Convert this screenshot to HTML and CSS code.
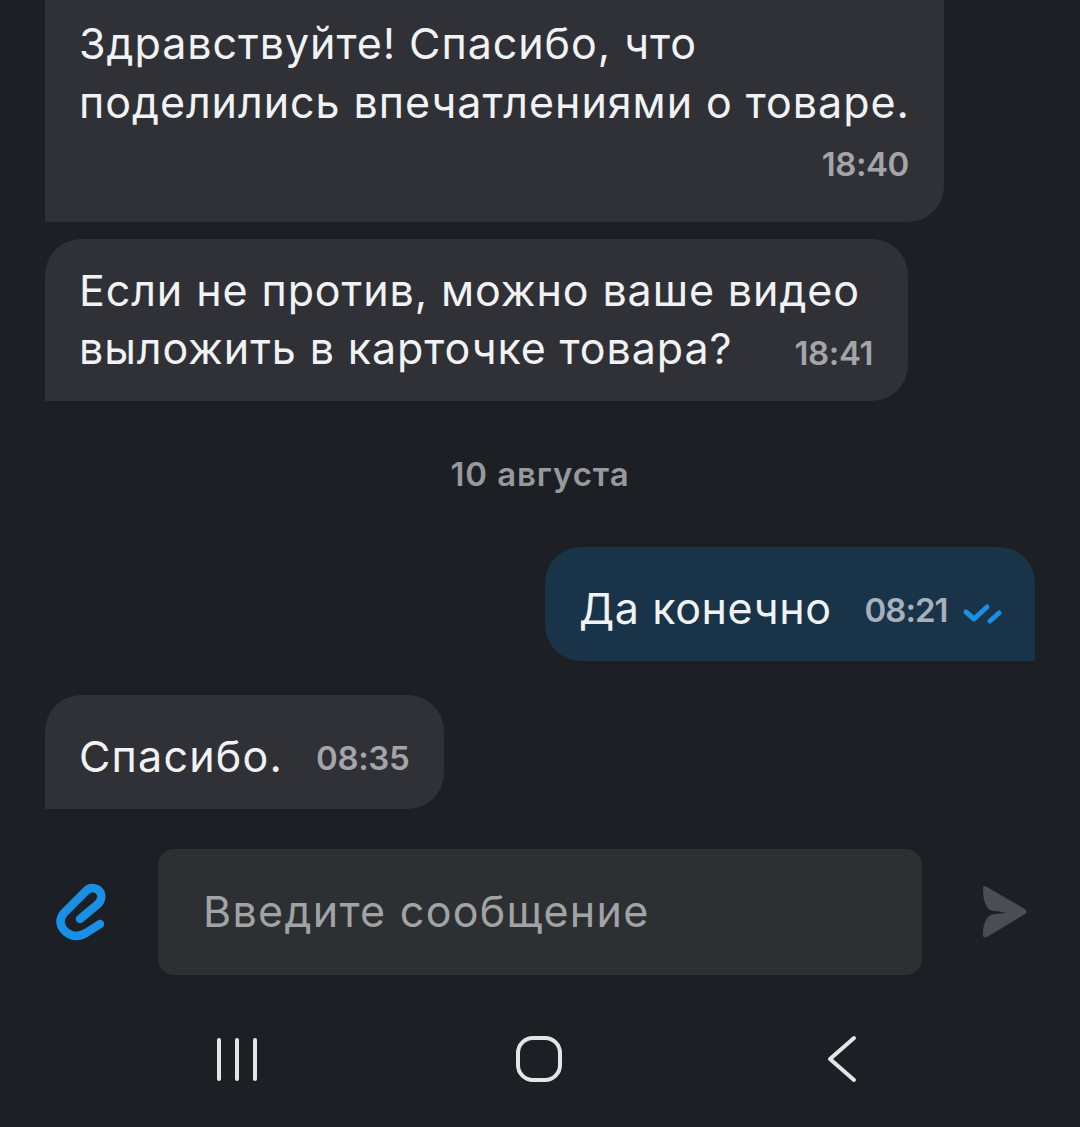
FILE: index.html
```html
<!DOCTYPE html>
<html lang="ru">
<head>
  <meta charset="UTF-8" />
  <title>Чат</title>
  <link rel="stylesheet" href="styles.css">
</head>
<body>
  <div class="chat">
    <div class="messages">
      <div class="bubble bubble-first">
        <p class="text">Здравствуйте! Спасибо, что<br>поделились впечатлениями о товаре.</p>
        <div class="time time-below">18:40</div>
      </div>
      <div class="bubble bubble-second">
        <p class="text">Если не против, можно ваше видео<br>выложить в карточке товара?</p>
        <span class="time time-corner">18:41</span>
      </div>
      <div class="date">10 августа</div>
      <div class="bubble bubble-mine">
        <span class="text">Да конечно</span>
        <span class="time">08:21</span>
        <svg class="ticks" width="50" height="35" viewBox="0 0 50 35" fill="none" stroke="#1a8fe6" stroke-width="5" stroke-linecap="round" stroke-linejoin="round">
          <path d="M6 12l8 7 13-12" />
          <path d="M30 21l9-8" />
        </svg>
      </div>
      <div class="bubble bubble-short">
        <span class="text">Спасибо.</span>
        <span class="time">08:35</span>
      </div>
    </div>

    <div class="composer">
      <svg class="clip" width="60" height="65" viewBox="0 0 60 65" fill="none" stroke="#1a8fe6" stroke-width="8.5" stroke-linecap="round" stroke-linejoin="round">
        <path d="M50 44L36 53C29 57 22 57 16 52C9 46 9 39 14 33L36 11C41 6 49 8 51 14C52 18 51 21 48 24L30 39" />
      </svg>
      <div class="input">Введите сообщение</div>
      <svg class="send" width="48" height="54" viewBox="0 0 48 54">
        <path d="M3 2c1-1 2-1 4 0l38 22c2 2 2 4 0 5L7 52c-3 1-4 0-4-2 0-7 1-13 5-18 2-2 4-3 8-3l10-1-10-2c-5 0-7-1-9-4C4 17 3 11 3 2z" fill="#4a4d51" />
      </svg>
    </div>

    <div class="navbar">
      <div class="nav-recent"><span></span><span></span><span></span></div>
      <div class="nav-home"></div>
      <svg class="nav-back" width="32" height="48" viewBox="0 0 32 48" fill="none" stroke="#e3e5e6" stroke-width="4" stroke-linecap="round" stroke-linejoin="round">
        <path d="M28 3L4 24l24 21" />
      </svg>
    </div>
  </div>
</body>
</html>
```

FILE: styles.css
```css
:root {
  --bg: #1c1f24;
  --bubble: #2f3136;
  --bubble-mine: #193349;
  --input: #2d3033;
  --text: #f1f2f4;
  --time: #a3a5a8;
  --time-mine: #a6b1bb;
  --placeholder: #a1a3a5;
}

* {
  margin: 0;
  padding: 0;
  box-sizing: border-box;
}

html, body {
  width: 1080px;
  height: 1127px;
  overflow: hidden;
  background: var(--bg);
  color: var(--text);
  font-family: Inter, "Noto Sans", sans-serif;
}

.chat {
  height: 1127px;
  display: flex;
  flex-direction: column;
  justify-content: flex-end;
}

.messages {
  display: flex;
  flex-direction: column;
  align-items: flex-start;
  padding: 0 45px;
}

.bubble {
  background: var(--bubble);
  border-radius: 36px 36px 36px 0;
}

.text {
  font-size: 43px;
  line-height: 59px;
  letter-spacing: 0.9px;
  white-space: nowrap;
}

.time {
  font-size: 33px;
  font-weight: 600;
  letter-spacing: -0.4px;
  color: var(--time);
}

.bubble-first {
  width: 899px;
  height: 240px;
  margin-top: -18px;
  padding: 32px 35px 0 34px;
  border-radius: 0 0 36px 0;
}

.bubble-first .text {
  letter-spacing: 0.95px;
}

.time-below {
  text-align: right;
  margin-top: 12px;
}

.bubble-second {
  position: relative;
  width: 863px;
  height: 162px;
  margin-top: 17px;
  padding: 22px 35px 0 34px;
}

.bubble-second .text {
  line-height: 58px;
}

.time-corner {
  position: absolute;
  right: 35px;
  bottom: 28px;
}

.date {
  align-self: center;
  margin-top: 53px;
  font-size: 33px;
  line-height: 40px;
  font-weight: 600;
  letter-spacing: 0.9px;
  color: #97999c;
}

.bubble-mine {
  align-self: flex-end;
  display: flex;
  align-items: center;
  width: 490px;
  height: 114px;
  margin-top: 53px;
  padding: 8px 0 0 34px;
  background: var(--bubble-mine);
  border-radius: 36px 36px 0 36px;
}

.bubble-mine .text {
  letter-spacing: 0.6px;
}

.bubble-mine .time {
  margin-left: 33px;
  margin-top: 4px;
  letter-spacing: -1px;
  color: var(--time-mine);
}

.ticks {
  margin-left: 12px;
  margin-top: 18px;
}

.bubble-short {
  display: flex;
  align-items: center;
  width: 399px;
  height: 114px;
  margin-top: 34px;
  padding: 8px 0 0 34px;
}

.bubble-short .text {
  letter-spacing: 1.2px;
}

.bubble-short .time {
  margin-left: 33px;
  margin-top: 4px;
}

.composer {
  display: flex;
  align-items: center;
  height: 126px;
  margin-top: 40px;
  padding-left: 50px;
}

.clip {
  flex: none;
  margin-top: 1px;
}

.input {
  flex: none;
  display: flex;
  align-items: center;
  width: 764px;
  height: 126px;
  margin-left: 48px;
  padding: 0 0 2px 45px;
  background: var(--input);
  border-radius: 16px;
  font-size: 43px;
  letter-spacing: 1.3px;
  color: var(--placeholder);
}

.send {
  flex: none;
  margin-left: 58px;
}

.navbar {
  display: flex;
  align-items: center;
  height: 152px;
  padding: 16px 0 0 217px;
}

.nav-recent {
  display: flex;
  gap: 14px;
}

.nav-recent span {
  width: 4px;
  height: 43px;
  border-radius: 2px;
  background: #e3e5e6;
}

.nav-home {
  width: 46px;
  height: 46px;
  margin-left: 259px;
  border: 4px solid #e3e5e6;
  border-radius: 17px;
}

.nav-back {
  margin-left: 264px;
}
```
